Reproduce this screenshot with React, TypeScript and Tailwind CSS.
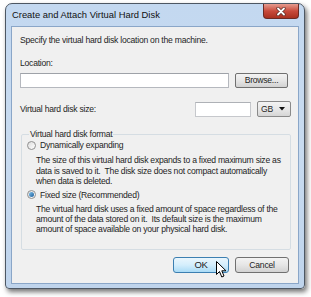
import React from "react";

function Radio({ checked }: { checked?: boolean }) {
  return (
    <span className="relative inline-flex w-[9px] h-[9px] rounded-full border border-[#8f8f8f] bg-gradient-to-br from-[#dcdcdc] to-[#ffffff] items-center justify-center shrink-0">
      {checked && (
        <span className="w-[5px] h-[5px] rounded-full bg-gradient-to-br from-[#7fc2ec] to-[#1b5e9a]" />
      )}
    </span>
  );
}

export default function App() {
  return (
    <div className="w-[311px] h-[297px] bg-white relative font-['Liberation_Sans',Arial,sans-serif] text-[8.6px] tracking-[-0.24px] text-[#1e1e1e] overflow-hidden whitespace-nowrap">
      <div className="pt-[3px] pl-[5px]">
        {/* window */}
        <div className="relative w-[300px] h-[286px] rounded-t-[7px] rounded-b-[4px] border border-[#4d5763] bg-gradient-to-b from-[#c3d8f0] via-[#c8dbf0] to-[#bfd4ec] shadow-[2px_3px_5px_rgba(0,0,0,0.55)]">
          {/* title bar */}
          <div className="h-[22px] flex items-center pl-[6px] text-[9.4px] tracking-[0px] text-[#111]">
            Create and Attach Virtual Hard Disk
          </div>
          <div className="absolute top-[0px] right-[5px] w-[36px] h-[15px] rounded-b-[4px] border border-[#6b2a23] border-t-0 bg-gradient-to-b from-[#e59b8f] via-[#c84a3b] to-[#a9301f] flex items-center justify-center">
            <svg width="10" height="9" viewBox="0 0 10 9">
              <path d="M2 1.5 L8 7.5 M8 1.5 L2 7.5" stroke="#5a2b25" strokeWidth="3.2" strokeLinecap="round" />
              <path d="M2 1.5 L8 7.5 M8 1.5 L2 7.5" stroke="#ffffff" strokeWidth="1.8" strokeLinecap="round" />
            </svg>
          </div>
          {/* client */}
          <div className="mx-[5px] h-[258px] border border-[#8aa6c8] bg-[#f0f0f0] flex flex-col pl-[8px] pr-[9px]">
            <div className="mt-[8px] h-[10px] leading-[10px]">
              Specify the virtual hard disk location on the machine.
            </div>
            <div className="mt-[13px] h-[10px] leading-[10px]">Location:</div>
            <div className="mt-[5px] flex gap-[6px] h-[15px]">
              <div className="w-[209px] h-[15px] bg-white border border-[#b5b8be] border-t-[#9ea2a8]" />
              <div className="w-[53px] h-[15px] rounded-[2px] border border-[#707070] bg-gradient-to-b from-[#f3f3f3] via-[#e6e6e6] to-[#d2d2d2] flex items-center justify-center leading-none">
                Browse...
              </div>
            </div>
            <div className="mt-[13px] flex items-center h-[16px]">
              <div className="flex-1 leading-[10px]">Virtual hard disk size:</div>
              <div className="w-[56px] h-[15px] bg-white border border-[#c6c8cc] border-t-[#aeb1b6]" />
              <div className="ml-[6px] w-[34px] h-[16px] rounded-[2px] border border-[#8a8a8a] bg-gradient-to-b from-[#f3f3f3] via-[#e8e8e8] to-[#d6d6d6] flex items-center pl-[3px] pr-[5px] -mr-[2px]">
                <span className="flex-1 leading-none">GB</span>
                <svg width="6" height="4" viewBox="0 0 6 4">
                  <path d="M0 0 H6 L3 3.5 Z" fill="#111" />
                </svg>
              </div>
            </div>
            <fieldset className="mt-[12px] ml-[1px] w-[270px] h-[121px] border border-[#d5dde3] rounded-[2px] px-[5px] -mr-[2px]">
              <legend className="ml-[2px] px-[1px] leading-[10px]">Virtual hard disk format</legend>
              <div className="flex items-center gap-[4px] h-[10px] mt-[1px]">
                <Radio />
                <span className="leading-[10px]">Dynamically expanding</span>
              </div>
              <div className="mt-[5px] ml-[9px] leading-[10.5px]">
                <div>The size of this virtual hard disk expands to a fixed maximum size as</div>
                <div>data is saved to it.&nbsp; The disk size does not compact automatically</div>
                <div>when data is deleted.</div>
              </div>
              <div className="flex items-center gap-[4px] h-[10px] mt-[3px]">
                <Radio checked />
                <span className="leading-[10px]">Fixed size (Recommended)</span>
              </div>
              <div className="mt-[4px] ml-[9px] leading-[10px]">
                <div>The virtual hard disk uses a fixed amount of space regardless of the</div>
                <div>amount of the data stored on it.&nbsp; Its default size is the maximum</div>
                <div>amount of space available on your physical hard disk.</div>
              </div>
            </fieldset>
            <div className="mt-[7px] flex justify-end gap-[6px]">
              <div className="w-[56px] h-[16px] rounded-[3px] border border-[#3c7fb1] bg-gradient-to-b from-[#eaf6fd] via-[#d4eefc] to-[#a9dbf6] flex items-center justify-center text-[9.5px] leading-none">
                OK
              </div>
              <div className="w-[54px] h-[16px] rounded-[3px] border border-[#707070] bg-gradient-to-b from-[#f3f3f3] via-[#e6e6e6] to-[#d2d2d2] flex items-center justify-center leading-none">
                Cancel
              </div>
            </div>
          </div>
        </div>
      </div>
      {/* mouse cursor */}
      <svg className="absolute left-[216px] top-[261px]" width="12" height="18" viewBox="0 0 12 18">
        <path d="M0.5 0.5 L0.5 13.5 L3.5 10.5 L5.8 16 L8 15 L5.8 9.8 L10 9.8 Z" fill="#fff" stroke="#000" strokeWidth="1" strokeLinejoin="round" />
      </svg>
    </div>
  );
}
